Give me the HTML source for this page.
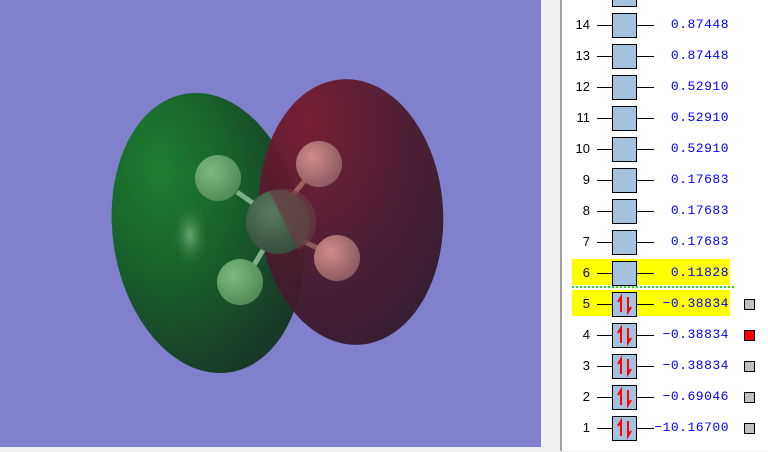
<!DOCTYPE html>
<html><head><style>
body{margin:0;width:768px;height:451px;overflow:hidden;background:#f0f0f0;position:relative;font-family:"Liberation Mono",monospace}
#vp{position:absolute;left:0;top:0;width:541px;height:447px;background:#8080cc}
#sep{position:absolute;left:560px;top:0;width:2px;height:451px;background:#a0a0a0}
#panel{position:absolute;left:562px;top:0;width:206px;height:451px;background:#fff}
.hl{position:absolute;left:572px;width:158px;height:26px;background:#ffff00}
.r{position:absolute;left:0;width:768px;height:26px}
.lab{position:absolute;right:calc(768px - 590px);top:4px;font-size:13px;color:#000;font-family:"Liberation Sans",sans-serif}
.ln{position:absolute;left:597px;width:57px;top:12px;height:1px;background:#000}
.bx{position:absolute;left:612px;top:0;width:23px;height:23px;border:1px solid #000;background:#a4c2de}
.val{position:absolute;right:calc(768px - 729px);top:4px;font-size:13px;color:#0000ff;letter-spacing:0.5px}
.sq{position:absolute;left:744px;top:7px;width:9px;height:9px;border:1px solid #000;background:#c0c0c0}
</style></head><body>
<div id="vp">
<svg width="541" height="447">
<defs>
<radialGradient id="g" cx="0.3" cy="0.25" r="0.85"><stop offset="0" stop-color="#1f8030"/><stop offset="0.5" stop-color="#175c2b"/><stop offset="1" stop-color="#1a3328"/></radialGradient>
<radialGradient id="rd" cx="0.3" cy="0.15" r="0.9"><stop offset="0" stop-color="#781a2c"/><stop offset="0.5" stop-color="#521a2e"/><stop offset="1" stop-color="#33192b"/></radialGradient>
<radialGradient id="hg" cx="0.35" cy="0.35" r="0.7"><stop offset="0" stop-color="#7dba82"/><stop offset="1" stop-color="#4f8a58"/></radialGradient>
<radialGradient id="hr" cx="0.35" cy="0.35" r="0.7"><stop offset="0" stop-color="#d28a8a"/><stop offset="1" stop-color="#8a5a60"/></radialGradient>
<radialGradient id="c" cx="0.4" cy="0.35" r="0.7"><stop offset="0" stop-color="#5a7a60"/><stop offset="1" stop-color="#344a3a"/></radialGradient>
<radialGradient id="hl" cx="0.5" cy="0.5" r="0.5"><stop offset="0" stop-color="#a0d0a8" stop-opacity="0.6"/><stop offset="1" stop-color="#2a7a40" stop-opacity="0"/></radialGradient>
</defs>
<ellipse cx="208" cy="233" rx="95" ry="141" transform="rotate(-9 208 233)" fill="url(#g)"/>
<ellipse cx="351" cy="212" rx="92" ry="133" transform="rotate(-4 351 212)" fill="url(#rd)" opacity="0.95"/>
<ellipse cx="190" cy="235" rx="18" ry="32" fill="url(#hl)"/>
<line x1="280" y1="222" x2="237" y2="192" stroke="#7db08a" stroke-width="5"/>
<line x1="280" y1="222" x2="254" y2="265" stroke="#7db08a" stroke-width="5"/>
<line x1="285" y1="205" x2="305" y2="180" stroke="#a06060" stroke-width="5"/>
<line x1="300" y1="240" x2="322" y2="250" stroke="#905858" stroke-width="5"/>
<circle cx="278" cy="222" r="32" fill="url(#c)"/>
<path d="M270 192 A32 32 0 0 1 298 250 Z" fill="#6a3a42" opacity="0.7"/>
<circle cx="218" cy="178" r="23" fill="url(#hg)"/>
<circle cx="240" cy="282" r="23" fill="url(#hg)"/>
<circle cx="319" cy="164" r="23" fill="url(#hr)"/>
<circle cx="337" cy="258" r="23" fill="url(#hr)"/>
</svg>
</div>
<div id="sep"></div>
<div id="panel"></div>
<div class="hl" style="top:259px"></div>
<div class="hl" style="top:290px"></div>
<div style="position:absolute;left:572px;top:286px;width:162px;border-top:2px dotted #22dd22"></div>

<div class="r" style="top:-18px"><div class="ln"></div><div class="bx"></div></div>
<div class="r" style="top:13px"><div class="lab">14</div><div class="ln"></div><div class="bx"></div><div class="val">0.87448</div></div>
<div class="r" style="top:44px"><div class="lab">13</div><div class="ln"></div><div class="bx"></div><div class="val">0.87448</div></div>
<div class="r" style="top:75px"><div class="lab">12</div><div class="ln"></div><div class="bx"></div><div class="val">0.52910</div></div>
<div class="r" style="top:106px"><div class="lab">11</div><div class="ln"></div><div class="bx"></div><div class="val">0.52910</div></div>
<div class="r" style="top:137px"><div class="lab">10</div><div class="ln"></div><div class="bx"></div><div class="val">0.52910</div></div>
<div class="r" style="top:168px"><div class="lab">9</div><div class="ln"></div><div class="bx"></div><div class="val">0.17683</div></div>
<div class="r" style="top:199px"><div class="lab">8</div><div class="ln"></div><div class="bx"></div><div class="val">0.17683</div></div>
<div class="r" style="top:230px"><div class="lab">7</div><div class="ln"></div><div class="bx"></div><div class="val">0.17683</div></div>
<div class="r" style="top:261px"><div class="lab">6</div><div class="ln"></div><div class="bx"></div><div class="val">0.11828</div></div>
<div class="r" style="top:292px"><div class="lab">5</div><div class="ln"></div><div class="bx"><svg width="23" height="23"><path d="M8 19V4L5 9" stroke="#f00" stroke-width="2" fill="none"/><path d="M15 4V19L18 14" stroke="#f00" stroke-width="2" fill="none"/></svg></div><div class="val">−0.38834</div><div class="sq"></div></div>
<div class="r" style="top:323px"><div class="lab">4</div><div class="ln"></div><div class="bx"><svg width="23" height="23"><path d="M8 19V4L5 9" stroke="#f00" stroke-width="2" fill="none"/><path d="M15 4V19L18 14" stroke="#f00" stroke-width="2" fill="none"/></svg></div><div class="val">−0.38834</div><div class="sq" style="background:#f00"></div></div>
<div class="r" style="top:354px"><div class="lab">3</div><div class="ln"></div><div class="bx"><svg width="23" height="23"><path d="M8 19V4L5 9" stroke="#f00" stroke-width="2" fill="none"/><path d="M15 4V19L18 14" stroke="#f00" stroke-width="2" fill="none"/></svg></div><div class="val">−0.38834</div><div class="sq"></div></div>
<div class="r" style="top:385px"><div class="lab">2</div><div class="ln"></div><div class="bx"><svg width="23" height="23"><path d="M8 19V4L5 9" stroke="#f00" stroke-width="2" fill="none"/><path d="M15 4V19L18 14" stroke="#f00" stroke-width="2" fill="none"/></svg></div><div class="val">−0.69046</div><div class="sq"></div></div>
<div class="r" style="top:416px"><div class="lab">1</div><div class="ln"></div><div class="bx"><svg width="23" height="23"><path d="M8 19V4L5 9" stroke="#f00" stroke-width="2" fill="none"/><path d="M15 4V19L18 14" stroke="#f00" stroke-width="2" fill="none"/></svg></div><div class="val">−10.16700</div><div class="sq"></div></div>
</body></html>
